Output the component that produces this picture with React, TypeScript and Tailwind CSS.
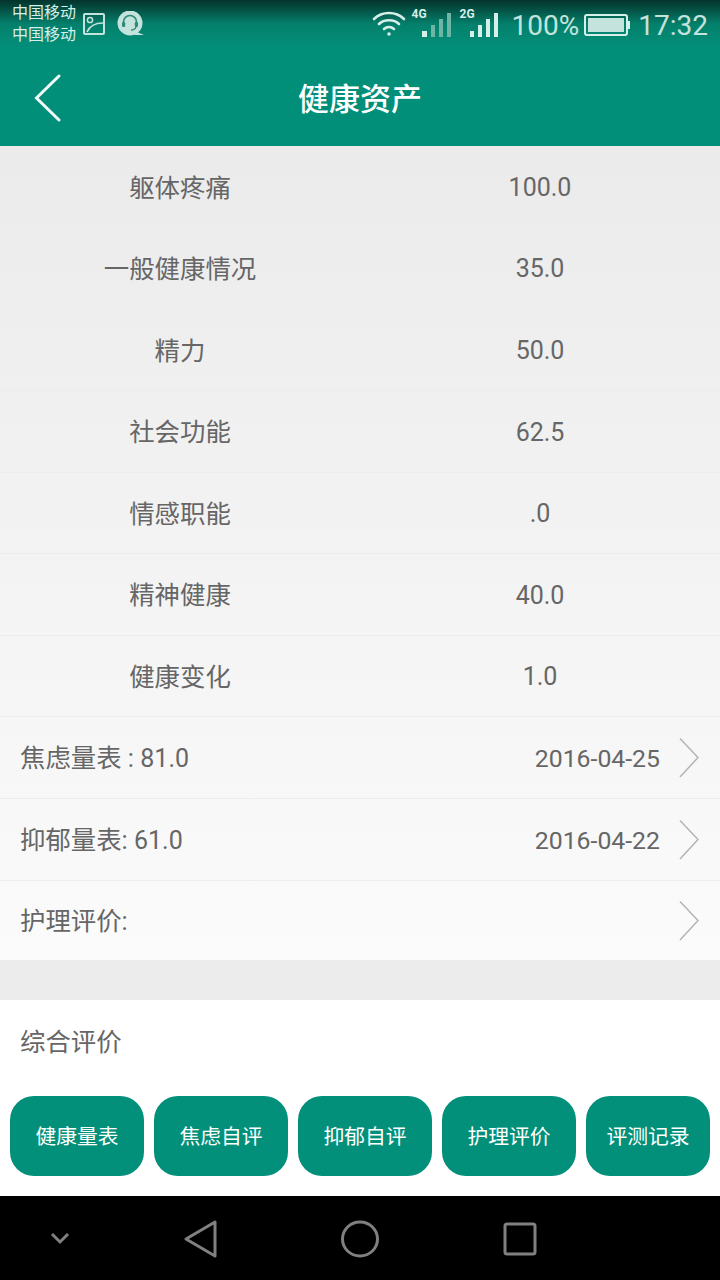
import React from 'react'

const scores = [
  { name: '躯体疼痛', value: '100.0' },
  { name: '一般健康情况', value: '35.0' },
  { name: '精力', value: '50.0' },
  { name: '社会功能', value: '62.5' },
  { name: '情感职能', value: '.0' },
  { name: '精神健康', value: '40.0' },
  { name: '健康变化', value: '1.0' },
]

const scales = [
  { label: '焦虑量表 : ', num: '81.0', date: '2016-04-25', height: 'h-[82px] pt-[2px]' },
  { label: '抑郁量表: ', num: '61.0', date: '2016-04-22', height: 'h-[82px] pt-[2px]' },
  { label: '护理评价:', num: '', date: '', height: 'h-[80px] pt-[2px]' },
]

const buttons = [
  { text: '健康量表', width: 'w-[134px]' },
  { text: '焦虑自评', width: 'w-[134px]' },
  { text: '抑郁自评', width: 'w-[134px]' },
  { text: '护理评价', width: 'w-[134px]' },
  { text: '评测记录', width: 'w-[124px]' },
]

const Chevron = () => (
  <svg width="20" height="42" viewBox="0 0 20 42" fill="none" stroke="#b4b4b4" strokeWidth="1.5">
    <path d="M1 1.5 L19 20.5 L1 40" />
  </svg>
)

const StatusBar = () => (
  <div className="h-[48px] flex items-center justify-between pl-3 pr-3 bg-gradient-to-b from-[#03342c] via-[#04806c] to-[#028f7a]">
    <div className="flex items-center">
      <div className="text-[16px] leading-[22px] text-[#d6efe9] w-[70px] mb-[1px]">
        <div>中国移动</div>
        <div>中国移动</div>
      </div>
      <svg width="24" height="24" viewBox="0 0 24 24" fill="none" stroke="#c4e3dc" strokeWidth="2">
        <rect x="2" y="2" width="20" height="20" rx="1" />
        <circle cx="8" cy="8" r="2.6" strokeWidth="1.5" />
        <path d="M5 20 C8 13 13 11 21 11" strokeWidth="1.7" />
      </svg>
      <svg className="ml-[11px]" width="28" height="26" viewBox="0 0 28 26">
        <circle cx="13" cy="12" r="12.5" fill="#c4e3dc" />
        <path d="M20 21 L27 24 L17 24 Z" fill="#c4e3dc" />
        <path d="M6.5 13 V11 a6.5 6.5 0 0 1 13 0 V13" fill="none" stroke="#2d8a78" strokeWidth="1.6" />
        <rect x="5" y="11" width="3.2" height="5" rx="1.2" fill="#2d8a78" />
        <rect x="17.8" y="11" width="3.2" height="5" rx="1.2" fill="#2d8a78" />
        <path d="M19 16 C18 19 16 19 14 19" fill="none" stroke="#2d8a78" strokeWidth="1.3" />
      </svg>
    </div>
    <div className="flex items-center text-[#c4e3dc]">
      <svg width="34" height="26" viewBox="0 0 34 26" fill="none" stroke="#d6efe9" strokeWidth="2.6" strokeLinecap="round">
        <path d="M2 8 C10 0 24 0 32 8" />
        <path d="M7 13 C12 8 22 8 27 13" />
        <path d="M12 18 C15 15.5 19 15.5 22 18" />
        <circle cx="17" cy="23" r="1.8" fill="#d6efe9" stroke="none" />
      </svg>
      <div className="relative ml-[6px] mb-[2px] w-[39px] h-[28px]">
        <span className="absolute left-0 top-[-1px] text-[12px] leading-[12px] font-bold text-[#d6efe9]">4G</span>
        <div className="absolute bottom-0 right-0 flex items-end gap-[4px]">
          <div className="w-[5px] h-[6px] bg-[#d6efe9]" />
          <div className="w-[4px] h-[12px] bg-[#6fb5a6]" />
          <div className="w-[4px] h-[18px] bg-[#6fb5a6]" />
          <div className="w-[4px] h-[24px] bg-[#6fb5a6]" />
        </div>
      </div>
      <div className="relative ml-[9px] mb-[2px] w-[38px] h-[28px]">
        <span className="absolute left-0 top-[-1px] text-[12px] leading-[12px] font-bold text-[#d6efe9]">2G</span>
        <div className="absolute bottom-0 right-0 flex items-end gap-[4px]">
          <div className="w-[4px] h-[6px] bg-[#d6efe9]" />
          <div className="w-[4px] h-[12px] bg-[#d6efe9]" />
          <div className="w-[4px] h-[18px] bg-[#d6efe9]" />
          <div className="w-[4px] h-[24px] bg-[#d6efe9]" />
        </div>
      </div>
      <span className="ml-[14px] mt-[4px] text-[28px] leading-none">100%</span>
      <div className="ml-[5px] mt-[2px] flex items-center">
        <div className="w-[44px] h-[22px] border-2 border-[#d6efe9] rounded-[3px] p-[2px]">
          <div className="w-full h-full bg-[#c4e3dc]" />
        </div>
        <div className="w-[2px] h-[8px] bg-[#d6efe9]" />
      </div>
      <span className="ml-[8px] mt-[4px] text-[28px] leading-none">17:32</span>
    </div>
  </div>
)

const App = () => {
  return (
    <div
      className="w-[720px] h-[1280px] flex flex-col bg-white overflow-hidden"
      style={{ fontFamily: '"Roboto", "Noto Sans CJK SC", sans-serif' }}
    >
      <StatusBar />
      <div className="h-[98px] relative flex items-center justify-center pt-[6px] bg-[#028f7a]">
        <svg className="absolute left-[34px] top-[26px]" width="28" height="48" viewBox="0 0 28 48" fill="none" stroke="#f2fbf9" strokeWidth="3" strokeLinecap="round">
          <path d="M25 2 L2.5 24 L25 46" />
        </svg>
        <span className="text-[31px] font-medium text-white">健康资产</span>
      </div>

      <div className="h-[814px] flex flex-col bg-gradient-to-b from-[#ebebeb] to-[#fbfbfb] text-[#666666] text-[25.4px]">
        {scores.map((s, i) => (
          <div key={s.name} className={`h-[81.43px] pt-[2px] flex items-center ${i > 1 ? 'border-t border-[#ececec]' : ''}`}>
            <div className="w-[360px] text-center">{s.name}</div>
            <div className="w-[360px] text-center text-[25px]">{s.value}</div>
          </div>
        ))}
        {scales.map((s) => (
          <div key={s.label} className={`${s.height} flex items-center border-t border-[#ececec] pl-5 pr-[21px]`}>
            <div className="flex-1 whitespace-pre">{s.label}<span className="text-[25px]">{s.num}</span></div>
            <div className="mr-[19px] text-[24.8px]">{s.date}</div>
            <Chevron />
          </div>
        ))}
      </div>

      <div className="h-[40px] bg-[#ececec]" />

      <div className="h-[196px] bg-white">
        <div className="h-[84px] flex items-center px-5 text-[25.4px] text-[#666666]">综合评价</div>
        <div className="flex gap-[10px] mt-[12px] px-[10px]">
          {buttons.map((b) => (
            <button key={b.text} className={`${b.width} h-[80px] pt-[3px] rounded-[24px] bg-[#02907a] text-white text-[20.8px]`}>
              {b.text}
            </button>
          ))}
        </div>
      </div>

      <div className="flex-1 bg-black relative">
        <svg className="absolute left-[50px] top-[36px]" width="20" height="14" viewBox="0 0 20 14" fill="none" stroke="#808080" strokeWidth="3">
          <path d="M2 2 L10 10 L18 2" />
        </svg>
        <svg className="absolute left-[183px] top-[24px]" width="36" height="38" viewBox="0 0 36 38" fill="none" stroke="#808080" strokeWidth="3" strokeLinejoin="round">
          <path d="M32 2 V36 L3 19 Z" />
        </svg>
        <svg className="absolute left-[340px] top-[24px]" width="40" height="38" viewBox="0 0 40 38" fill="none" stroke="#808080" strokeWidth="3">
          <ellipse cx="20" cy="19" rx="17.5" ry="17" />
        </svg>
        <svg className="absolute left-[503px] top-[26px]" width="34" height="34" viewBox="0 0 34 34" fill="none" stroke="#808080" strokeWidth="3">
          <rect x="2" y="2" width="30" height="30" rx="2" />
        </svg>
      </div>
    </div>
  )
}

export default App
